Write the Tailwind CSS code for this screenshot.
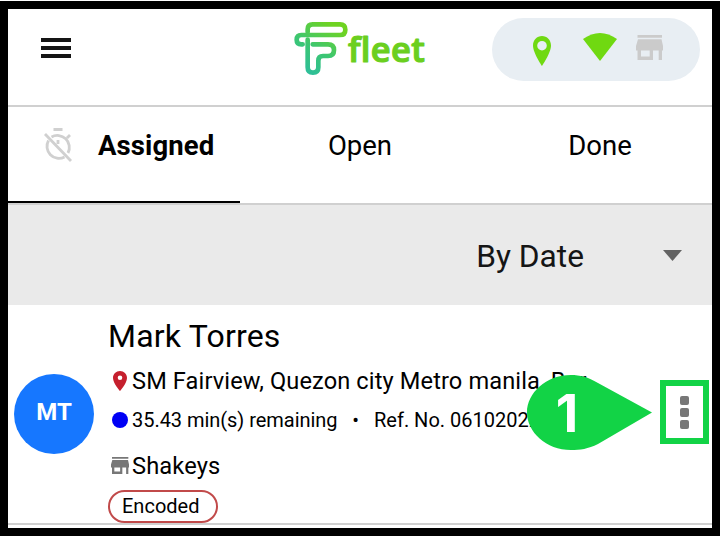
<!DOCTYPE html>
<html lang="en">
<head>
  <meta charset="UTF-8" />
  <meta name="viewport" content="width=device-width, initial-scale=1.0"/>
  <title>Fleet</title>
  <script src="https://cdn.jsdelivr.net/npm/@tailwindcss/browser@4"></script>
</head>
<body class="bg-white font-['Roboto',sans-serif] text-black overflow-hidden">
  <svg class="hidden">
    <symbol id="pin" viewBox="5 2 14 20" preserveAspectRatio="none"><path d="M12 2C8.13 2 5 5.13 5 9c0 5.25 7 13 7 13s7-7.75 7-13c0-3.87-3.13-7-7-7zm0 9a2.300 2.300 0 1 1 0-4.600 2.300 2.300 0 0 1 0 4.600z"/></symbol>
    <symbol id="store" viewBox="0 0 27 25" preserveAspectRatio="none"><path d="M1.500 0h24.500v2.700H1.500zM2 4.300h23.500L27 11v4.500h-1V25h-3.300V15.500H17V25H1.500V15.500H0V11zM5 15.500v6h8.700v-6z" fill-rule="evenodd"/></symbol>
  </svg>

  <div class="relative mt-px w-[720px] h-[535px] border-8 border-black bg-white flex flex-col">
    <!-- Header -->
    <header class="h-[98px] shrink-0 border-b-2 border-[#d0d0d0] flex items-start">
      <div class="mt-[29px] ml-[33px] w-[30px] flex flex-col gap-1">
        <span class="h-1 bg-[#151515]"></span>
        <span class="h-1 bg-[#151515]"></span>
        <span class="h-1 bg-[#151515]"></span>
      </div>
      <div class="ml-[222px] mt-[11px] flex w-[144px]">
        <svg class="w-[56px] h-[56px] shrink-0" viewBox="39 30 168 168" fill="none" stroke="url(#logo)" stroke-width="14" stroke-linecap="round" stroke-linejoin="round">
          <defs>
            <linearGradient id="logo" gradientUnits="userSpaceOnUse" x1="60" y1="190" x2="150" y2="40">
              <stop offset="0" stop-color="#2bbda0"/>
              <stop offset=".5" stop-color="#3cc672"/>
              <stop offset="1" stop-color="#6fd321"/>
            </linearGradient>
          </defs>
          <path d="M83 66V58Q83 43 98 43H180Q196 43 196 59Q196 75 180 75H64Q50 75 50 89Q50 103 64 103H68"/>
          <path d="M83 89V172Q83 188 99 188Q115 188 115 172V152Q115 138 129 138H144Q162 138 162 120Q162 103 144 103H98"/>
        </svg>
        <svg class="-ml-1 w-[92px] h-[56px] shrink-0" viewBox="-4 0 92 56">
          <text x="-1" y="41.500" textLength="77" font-family="Open Sans, sans-serif" font-size="34.500" font-weight="600" fill="#6bcf1f" stroke="#6bcf1f" stroke-width="1.200" stroke-linejoin="round" style="font-variant-ligatures: none">fleet</text>
        </svg>
      </div>
      <div class="ml-[55px] mt-[9px] w-[208px] h-[63px] rounded-full bg-[#e8eef3] flex items-start">
        <svg class="ml-[41px] mt-[18px] w-[18px] h-[30px] fill-[#70d911]" viewBox="0 0 18 30"><path d="M9 0C4 0 0 4 0 9.500C0 17 9 30 9 30S18 17 18 9.500C18 4 14 0 9 0zm0 14.500a4.800 4.800 0 1 1 0-9.600 4.800 4.800 0 0 1 0 9.600z"/></svg>
        <svg class="ml-[32px] mt-[15px] w-[34px] h-[28px] fill-[#70d911]" viewBox="0 0 34 28"><path d="M0 6Q17-6 34 6L17 28z"/></svg>
        <svg class="ml-[19px] mt-[17px] w-[27px] h-[25px] fill-[#cbcbcb]"><use href="#store"/></svg>
      </div>
    </header>

    <!-- Tabs -->
    <nav class="h-[98px] shrink-0 border-b-2 border-[#d0d0d0] grid grid-cols-[232px_240px_232px] text-[27.5px] leading-8">
      <div class="h-[96px] border-b-2 border-black flex">
        <svg class="ml-[35px] mt-[20px] w-[30px] h-[35px] shrink-0" viewBox="0 0 30 35" fill="none" stroke="#d0d0d0" stroke-width="2.800">
          <path d="M10.500 2.500h9M8.500 10A12 12 0 0 1 25 26M21.500 30A12 12 0 0 1 5.500 13.500M24 11l3-3M2 7l26 27M15 13v4"/>
        </svg>
        <span class="ml-[25px] mt-[23px] font-bold tracking-[0.1px]">Assigned</span>
      </div>
      <span class="mt-[23px] text-center">Open</span>
      <span class="mt-[23px] text-center pl-2">Done</span>
    </nav>

    <!-- Sort -->
    <div class="h-[100px] shrink-0 bg-[#eaeaea] flex items-center justify-end pr-[30px] text-[31.7px] text-[#151515]">
      <span class="mt-1">By Date</span>
      <svg class="ml-[79px] w-[19px] h-[11px] fill-[#636363]" viewBox="0 0 19 11"><path d="M0 0h19L9.500 11z"/></svg>
    </div>

    <!-- Order -->
    <div class="h-[220px] shrink-0 border-b-2 border-[#d0d0d0] flex whitespace-nowrap">
      <div class="mt-[69px] ml-[6px] size-[80px] shrink-0 rounded-full bg-[#1677ff] flex items-center justify-center text-white font-bold text-[24px] pb-1">MT</div>
      <div class="ml-[14px] flex flex-col items-start">
        <h1 class="mt-[12px] text-[32px] leading-[38px] tracking-[0.2px]">Mark Torres</h1>
        <div class="mt-[12px] flex h-7 text-[23.6px] leading-7 tracking-[0.12px]">
          <svg class="ml-[5px] mr-[5px] mt-[4px] w-[14px] h-[20px] fill-[#c5202e]"><use href="#pin"/></svg>
          <span>SM Fairview, Quezon city Metro manila, Bar...</span>
        </div>
        <div class="mt-[13px] flex h-6 text-[20px] leading-6">
          <span class="ml-[4px] mr-[4px] mt-[4px] size-[16px] rounded-full bg-[#0000f5]"></span>
          <span class="w-[205px] tracking-[-0.04px]">35.43 min(s) remaining</span>
          <span class="w-[37px] text-center">•</span>
          <span>Ref. No. 06102022</span>
        </div>
        <div class="mt-[20px] flex h-7 text-[23.7px] leading-7 tracking-[0.1px]">
          <svg class="ml-[3px] mr-[3px] mt-[5px] w-[18px] h-[17px] fill-[#777]"><use href="#store"/></svg>
          <span>Shakeys</span>
        </div>
        <span class="mt-[10px] h-[33px] w-[110px] rounded-full border-2 border-[#c14a4a] pl-3 text-[20px] leading-[29px]">Encoded</span>
      </div>
    </div>

    <!-- Step marker -->
    <svg class="absolute left-[519px] top-[366px] w-[126px] h-[76px]" viewBox="0 0 126 76">
      <path d="M125 37.500L71 69C61 74 53 75 44 75C19 75 0 57 0 37.500C0 18 19 0 44 0C53 0 61 2 71 8z" fill="#12d346"/>
      <text x="40" y="56.500" text-anchor="middle" font-family="Inter, sans-serif" font-size="52" font-weight="700" fill="#fff">1</text>
    </svg>
    <div class="absolute left-[652px] top-[371px] w-[49px] h-[64px] border-6 border-[#12d346] bg-white flex flex-col items-center justify-center gap-[3px]">
      <span class="size-[9px] rounded-[2px] bg-[#777]"></span>
      <span class="size-[9px] rounded-[2px] bg-[#777]"></span>
      <span class="size-[9px] rounded-[2px] bg-[#777]"></span>
    </div>
  </div>
</body>
</html>
